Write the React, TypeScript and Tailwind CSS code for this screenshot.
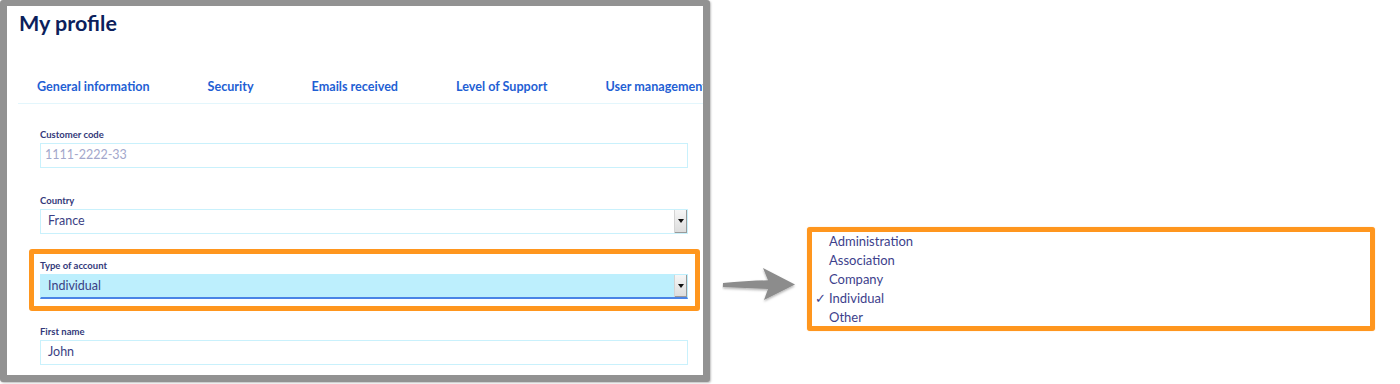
import React from "react";

const tabs = ["General information", "Security", "Emails received", "Level of Support", "User management"];

const options = ["Administration", "Association", "Company", "Individual", "Other"];

const SelectArrow = () => (
  <div className="flex h-full w-[13px] items-center justify-center border-l border-[#d4d4d4] bg-gradient-to-b from-[#f6f6f6] to-[#dcdcdc] shadow-[inset_-1px_-1px_0_#9a9a9a]">
    <svg width="6" height="4" viewBox="0 0 6 4">
      <path d="M0 0h6L3 4z" fill="#111" />
    </svg>
  </div>
);

const Field = ({
  label,
  value,
  select,
  muted,
  active,
}: {
  label: string;
  value: string;
  select?: boolean;
  muted?: boolean;
  active?: boolean;
}) => (
  <div className="flex flex-col">
    <span className="h-[12px] text-[9.5px] font-bold leading-[12px] text-[#33397a]">{label}</span>
    <div
      className={`mt-[2px] flex h-[25px] items-center justify-between border ${
        active ? "border-[#bdeffd] border-b-2 border-b-[#4a84e6] bg-[#bdeffd]" : "border-[#c9f1fc] bg-white"
      }`}
    >
      <span
        className={`text-[12.5px] ${muted ? "pl-[4px] text-[#a3a7cb]" : "pl-[7px] text-[#3b3f84]"}`}
      >
        {value}
      </span>
      {select && <SelectArrow />}
    </div>
  </div>
);

const App = () => {
  return (
    <div className="flex h-[384px] w-[1400px] items-start bg-white font-['Lato',sans-serif]">
      {/* screenshot frame */}
      <div className="h-[382px] w-[710px] shrink-0 overflow-hidden rounded-[3px] border-[7px] border-t-[6px] border-[#929292] bg-white shadow-[1px_1px_2px_rgba(0,0,0,0.25)]">
        <h1 className="pl-[12px] pt-[5px] text-[21.5px] font-bold leading-[24px] text-[#0c1f5c]">My profile</h1>

        <div className="ml-[11px] mt-[44px] flex w-[720px] gap-[58px] whitespace-nowrap border-b border-[#e3f6fc] pb-[8px] pl-[19px]">
          {tabs.map((t) => (
            <span key={t} className="text-[12.6px] font-bold leading-[16px] text-[#1f5fd4]">
              {t}
            </span>
          ))}
        </div>

        <div className="ml-[33px] mt-[25px] flex w-[648px] flex-col gap-[26.5px]">
          <Field label="Customer code" value="1111-2222-33" muted />
          <Field label="Country" value="France" select />
          <div className="relative">
            <div className="pointer-events-none absolute -left-[11px] -right-[12px] -top-[11px] -bottom-[12px] rounded-[3px] border-[5px] border-[#ff961e]" />
            <Field label="Type of account" value="Individual" select active />
          </div>
          <Field label="First name" value="John" />
        </div>
      </div>

      {/* arrow */}
      <svg className="ml-[12px] mt-[266px] shrink-0" width="78" height="38" viewBox="0 0 78 38">
        <defs>
          <filter id="sh" x="-20%" y="-20%" width="140%" height="160%">
            <feDropShadow dx="0" dy="1.5" stdDeviation="1.2" floodColor="#000" floodOpacity="0.3" />
          </filter>
        </defs>
        <path
          d="M1 17 C16 15.5 30 14.6 46 14.3 L41 2 L73 18.5 L42 34 L46 23 C30 22.3 16 21.8 1 21 Z"
          fill="#8c8c8c"
          filter="url(#sh)"
        />
      </svg>

      {/* dropdown list */}
      <div className="ml-[7px] mt-[227px] h-[104px] w-[568px] shrink-0 rounded-[3px] border-[5px] border-[#ff961e] bg-white shadow-[0_0_1px_rgba(255,150,30,0.6)]">
        {options.map((o) => (
          <div key={o} className="flex h-[19px] items-center text-[13px] leading-[19px] text-[#3d3f8c]">
            <span className="w-[17px] pl-[3px] text-[13px]">{o === "Individual" ? "✓" : ""}</span>
            <span>{o}</span>
          </div>
        ))}
      </div>
    </div>
  );
};

export default App;
